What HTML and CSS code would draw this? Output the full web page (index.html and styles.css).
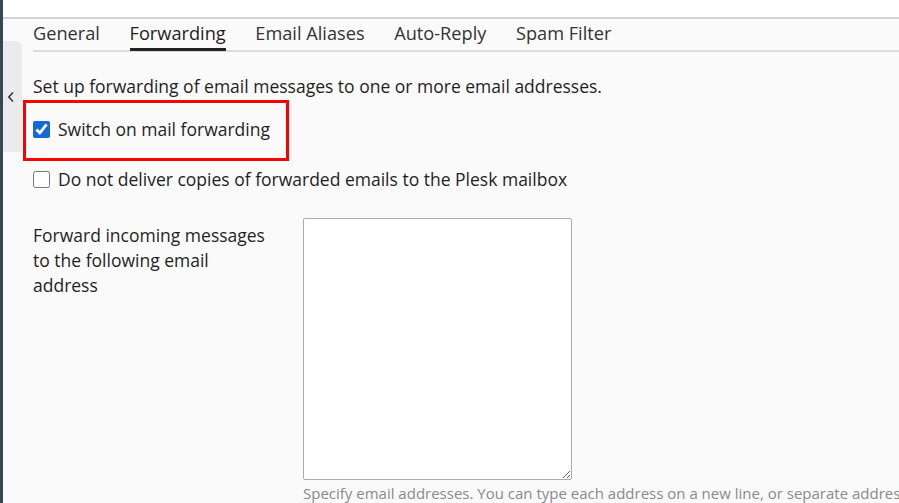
FILE: index.html
```html
<!DOCTYPE html>
<html>
<head>
<meta charset="utf-8">
<link rel="stylesheet" href="styles.css">
</head>
<body>
<div class="app">
  <div class="rail"></div>
  <div class="main">
    <div class="topbar"></div>
    <div class="body">
      <div class="toggle-col">
        <div class="toggle">
          <svg width="8" height="12" viewBox="0 0 8 12"><path d="M6 1.5 L1.8 6 L6 10.5" fill="none" stroke="#333" stroke-width="1.5"/></svg>
        </div>
      </div>
      <div class="page">
        <nav class="tabs">
          <span class="tab">General</span>
          <span class="tab active">Forwarding</span>
          <span class="tab">Email Aliases</span>
          <span class="tab">Auto-Reply</span>
          <span class="tab">Spam Filter</span>
        </nav>
        <p class="intro">Set up forwarding of email messages to one or more email addresses.</p>
        <label class="check highlight"><input type="checkbox" checked><span>Switch on mail forwarding</span></label>
        <label class="check plain"><input type="checkbox"><span>Do not deliver copies of forwarded emails to the Plesk mailbox</span></label>
        <div class="field">
          <div class="field-label">Forward incoming messages to the following email address</div>
          <div class="field-control">
            <textarea class="addresses"></textarea>
            <div class="hint">Specify email addresses. You can type each address on a new line, or separate addresses with commas or spaces.</div>
          </div>
        </div>
      </div>
    </div>
  </div>
</div>
</body>
</html>
```
FILE: styles.css
```css
html, body {
  margin: 0;
  padding: 0;
  height: 100%;
  overflow: hidden;
}
body {
  background: #fafafa;
  font-family: "Open Sans", "Noto Sans", sans-serif;
  font-size: 17.5px;
  color: #1f1f1f;
}
.app {
  display: flex;
  height: 100%;
}
.rail {
  width: 3px;
  flex: none;
  background: #38485a;
}
.main {
  flex: 1;
  display: flex;
  flex-direction: column;
  min-width: 0;
}
.topbar {
  height: 17px;
  background: #fff;
  border-bottom: 2px solid #d3d3d3;
  flex: none;
}
.body {
  display: flex;
  flex: 1;
}
.toggle-col {
  width: 19px;
  flex: none;
  padding-top: 22px;
}
.toggle {
  height: 111px;
  background: #ebebeb;
  border-radius: 0 6px 0 0;
  display: flex;
  align-items: center;
  justify-content: center;
  padding-right: 1px;
}
.toggle svg { display: block; margin-left: -2px; }
.page {
  flex: 1;
  padding-left: 11px;
  min-width: 0;
}
.tabs {
  display: flex;
  gap: 29.6px;
  border-bottom: 2px solid #dcdcdc;
  height: 31px;
  white-space: nowrap;
}
.tab {
  font-size: 18.2px;
  color: #333;
  line-height: 28px;
  height: 31px;
  box-sizing: border-box;
}
.tab.active {
  color: #1f1f1f;
  border-bottom: 3px solid #222;
  height: 32px;
}
.intro {
  margin: 22px 0 0;
  line-height: 24px;
}
.check {
  display: flex;
  align-items: center;
  gap: 8px;
  line-height: 25px;
  white-space: nowrap;
}
.check input {
  width: 17px;
  height: 17px;
  margin: 0;
  accent-color: #1469d9;
}
.highlight {
  width: fit-content;
  border: 3px solid #ff0000;
  margin: 2px 0 0 -10px;
  padding: 14px 16px 16px 7px;
}
.plain {
  margin-top: 6px;
}
.field {
  display: flex;
  margin-top: 26px;
}
.field-label {
  width: 236px;
  flex: none;
  margin-right: 34px;
  line-height: 25px;
  padding-top: 5px;
}
.field-control {
  flex: 1;
  min-width: 0;
}
.addresses {
  display: block;
  width: 269px;
  height: 262px;
  box-sizing: border-box;
  border: 1px solid #ababab;
  border-radius: 2px;
  background: #fff;
  margin: 0;
  resize: vertical;
}
.hint {
  margin-top: 2px;
  font-size: 15px;
  color: #8a8a8a;
  white-space: nowrap;
  line-height: 22px;
}
```
